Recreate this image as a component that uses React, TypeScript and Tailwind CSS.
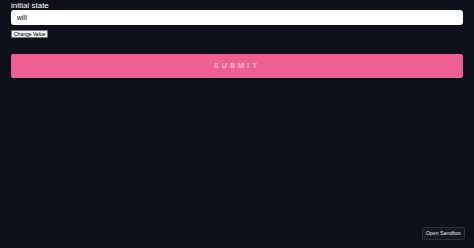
import React, { useState } from 'react';

export default function App() {
  const [value, setValue] = useState('will');

  return (
    <div className="relative min-h-screen bg-[#0e111a] px-[11px] font-['Liberation_Sans',Arial,sans-serif]">
      <label className="block pt-[2px] text-[8px] leading-[8px] text-white">
        initial state
      </label>
      <input
        value={value}
        onChange={(e) => setValue(e.target.value)}
        className="block w-full h-[15px] rounded-[3px] bg-white px-[6px] text-[7px] text-black outline-none"
      />
      <button
        onClick={() => setValue('changed')}
        className="mt-[5px] block h-[8px] rounded-[1px] border border-[#767676] bg-[#efefef] px-[2px] text-[5px] leading-[6px] text-black"
      >
        Change Value
      </button>
      <button className="mt-[16px] block w-full h-[24px] rounded-[2px] bg-[#ef5f93] text-[7px] tracking-[3.3px] text-[#fde7ef] shadow-[0_1px_2px_rgba(0,0,0,0.4)]">
        SUBMIT
      </button>
      <button className="absolute bottom-[8px] right-[9px] h-[13px] rounded-[2px] border border-[#2c2f36] bg-[#151821] px-[3px] text-[5.3px] leading-[11px] text-[#e4e4e4]">
        Open Sandbox
      </button>
    </div>
  );
}
